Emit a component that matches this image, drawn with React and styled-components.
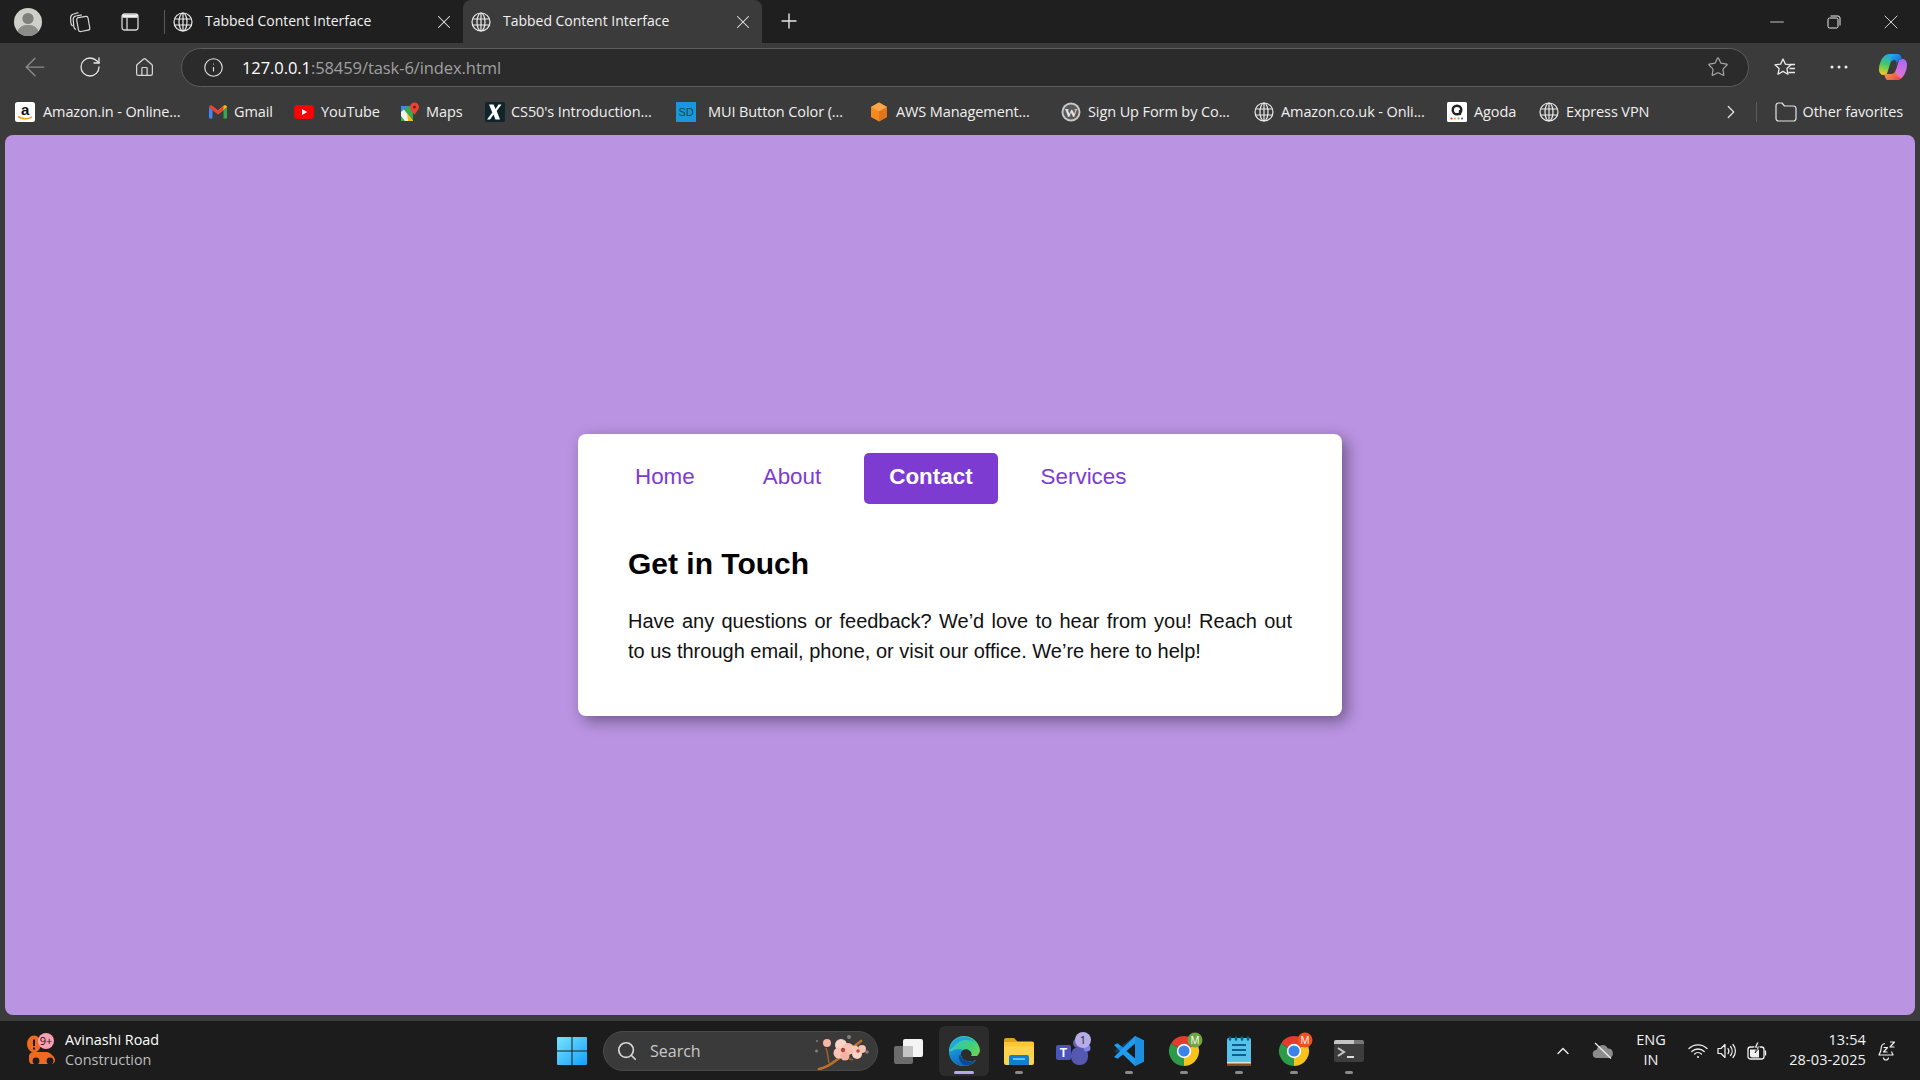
import React from "react";
import styled, { createGlobalStyle } from "styled-components";
import {
  ArrowLeft,
  RotateCw,
  House,
  Info,
  Star,
  Plus,
  X,
  Minus,
  ChevronRight,
  ChevronUp,
  Search,
} from "lucide-react";

const GlobalStyle = createGlobalStyle`
  * { box-sizing: border-box; }
  html, body { margin: 0; padding: 0; }
  body { font-family: "Open Sans", "Noto Sans", sans-serif; overflow: hidden; background: #3b3b3b; }
`;

const Screen = styled.div`
  width: 1920px;
  height: 1080px;
  display: flex;
  flex-direction: column;
  background: #3b3b3b;
`;

/* browser chrome */
const TabStrip = styled.div`
  height: 43px;
  display: flex;
  align-items: center;
  background: #1f1f1f;
  color: #fff;
`;

const Slot = styled.div`
  flex: none;
  width: ${(p) => p.$w}px;
  height: 100%;
  display: flex;
  align-items: center;
  justify-content: center;
  margin-left: ${(p) => p.$ml || 0}px;
  padding-bottom: ${(p) => p.$pb || 0}px;
  color: ${(p) => p.$color || "#e6e6e6"};
`;

const TabDivider = styled.div`
  flex: none;
  width: 1px;
  height: 24px;
  margin-left: 8px;
  background: #5a5a5a;
`;

const Tab = styled.div`
  flex: none;
  width: ${(p) => p.$w}px;
  height: 43px;
  padding: 0 8px;
  display: flex;
  align-items: center;
  gap: 12px;
  border-radius: 8px 8px 0 0;
  background: ${(p) => (p.$active ? "#3b3b3b" : "transparent")};
`;

const TabTitle = styled.span`
  flex: 1;
  padding-bottom: 2px;
  font-size: 14px;
  letter-spacing: -0.02px;
  color: #f2f2f2;
  white-space: nowrap;
`;

const WindowControls = styled.div`
  margin-left: auto;
  height: 100%;
  display: flex;
`;

const Toolbar = styled.div`
  height: 45px;
  padding: 3px 0 0 8px;
  display: flex;
  align-items: center;
  background: #3b3b3b;
`;

const UrlBox = styled.div`
  flex: none;
  width: 1568px;
  height: 39px;
  margin-left: 9px;
  padding: 0 19px 0 21px;
  display: flex;
  align-items: center;
  border: 1.5px solid #5c5c5c;
  border-radius: 20px;
  background: #2b2b2b;
`;

const UrlText = styled.span`
  margin-left: 18px;
  flex: 1;
  font-size: 16.5px;
  letter-spacing: -0.08px;
  color: #a0a0a0;
  b {
    font-weight: 400;
    color: #fff;
  }
`;

const ToolbarEnd = styled.div`
  margin-left: 9px;
  height: 100%;
  display: flex;
`;

const Bookmarks = styled.div`
  height: 47px;
  padding-left: 15px;
  display: flex;
  align-items: center;
  background: #3b3b3b;
`;

const Bookmark = styled.div`
  flex: none;
  width: ${(p) => p.$w}px;
  display: flex;
  align-items: center;
  gap: ${(p) => p.$gap || 7}px;
  font-size: 14.5px;
  letter-spacing: -0.1px;
  color: #f0f0f0;
  white-space: nowrap;
`;

const BookmarkEnd = styled.div`
  margin-left: auto;
  padding-right: 17px;
  display: flex;
  align-items: center;
  gap: 6px;
  font-size: 14.5px;
  letter-spacing: -0.1px;
  color: #f0f0f0;
`;

const BarDivider = styled.div`
  width: 1px;
  height: 20px;
  margin: 0 12px 0 8px;
  background: #5a5a5a;
`;

/* page */
const PageFrame = styled.div`
  flex: 1;
  padding: 0 5px 5px;
  display: flex;
`;

const Page = styled.main`
  flex: 1;
  display: flex;
  align-items: center;
  justify-content: center;
  border-radius: 8px;
  background: #ba93e2;
  font-family: "Liberation Sans", Arial, sans-serif;
`;

const Card = styled.section`
  width: 764px;
  height: 282px;
  padding-top: 19px;
  border-radius: 8px;
  background: #fff;
  box-shadow: 5px 5px 15px rgba(0, 0, 0, 0.4);
`;

const TabNav = styled.nav`
  padding: 0 32px;
  display: flex;
  gap: 18px;
`;

const NavButton = styled.button`
  height: 51px;
  padding: 0 25px 3px;
  border: 0;
  border-radius: 5px;
  font-family: inherit;
  font-size: 22.4px;
  font-weight: ${(p) => (p.$active ? 700 : 400)};
  color: ${(p) => (p.$active ? "#fff" : "#7e3bd2")};
  background: ${(p) => (p.$active ? "#7e3bd2" : "transparent")};
`;

const Panel = styled.div`
  padding: 42px 50px 0;
`;

const Heading = styled.h2`
  margin: 0 0 25px;
  font-size: 30px;
  line-height: 35px;
  font-weight: 700;
  color: #000;
`;

const Copy = styled.p`
  margin: 0;
  font-size: 20px;
  line-height: 30px;
  text-align: justify;
  color: #111;
`;

/* taskbar */
const Taskbar = styled.footer`
  height: 60px;
  display: flex;
  align-items: center;
  border-top: 1px solid #3a3a3a;
  background: #1c1c1c;
  color: #fff;
`;

const Widget = styled.div`
  flex: none;
  width: 552px;
  height: 100%;
  padding-left: 25px;
  display: flex;
  align-items: center;
  gap: 4px;
`;

const WidgetText = styled.div`
  padding-bottom: 2px;
  font-size: 14.4px;
  line-height: 20px;
  white-space: nowrap;
  small {
    display: block;
    font-size: 14.4px;
    color: #bdbdbd;
  }
`;

const SearchPill = styled.div`
  flex: none;
  width: 275px;
  height: 40px;
  margin-left: 11px;
  padding: 0 6px 0 12px;
  display: flex;
  align-items: center;
  justify-content: space-between;
  border: 1px solid #4a4a4a;
  border-radius: 20px;
  background: #3a3a3a;
`;

const SearchLabel = styled.span`
  flex: 1;
  margin-left: 12px;
  font-size: 16px;
  color: #c8c8c8;
`;

const TaskSlot = styled.div`
  position: relative;
  flex: none;
  width: 55px;
  height: 100%;
  display: flex;
  align-items: center;
  justify-content: center;
  margin-left: ${(p) => p.$ml || 0}px;
`;

const ActiveBox = styled.div`
  position: absolute;
  top: 5px;
  left: 2.5px;
  width: 50px;
  height: 50px;
  border-radius: 6px;
  background: #2c2c2c;
`;

const Pip = styled.span`
  position: absolute;
  bottom: 6px;
  left: 50%;
  width: ${(p) => (p.$active ? 20 : 8)}px;
  height: 3px;
  border-radius: 2px;
  transform: translateX(-50%);
  background: ${(p) => (p.$active ? "#b5a7ea" : "#8a8a8a")};
`;

const IconLayer = styled.div`
  position: relative;
  display: flex;
`;

const Tray = styled.div`
  margin-left: auto;
  height: 100%;
  padding-right: 18px;
  display: flex;
  align-items: center;
`;

const TraySlot = styled.div`
  flex: none;
  width: ${(p) => p.$w}px;
  margin-left: ${(p) => p.$ml || 0}px;
  display: flex;
  justify-content: center;
  text-align: center;
  color: #f2f2f2;
`;

const Lang = styled.div`
  padding-bottom: 2px;
  font-size: 14.5px;
  line-height: 20px;
`;

const Clock = styled.div`
  width: 100%;
  padding-bottom: 2px;
  text-align: right;
  font-size: 14.5px;
  letter-spacing: 0.12px;
  line-height: 20px;
  white-space: nowrap;
`;

/* small drawings */
const GlobeIcon = ({ size = 20 }) => (
  <svg width={size} height={size} viewBox="0 0 20 20" fill="none" stroke="#ececec" strokeWidth="1.2">
    <circle cx="10" cy="10" r="9" />
    <ellipse cx="10" cy="10" rx="4" ry="9" />
    <path d="M1.6 7h16.8M1.6 13h16.8M10 1v18" />
  </svg>
);

const Avatar = () => (
  <svg width="28" height="28" viewBox="0 0 28 28">
    <circle cx="14" cy="14" r="14" fill="#cfcfca" />
    <circle cx="14" cy="10.5" r="5.6" fill="#7f7f7b" />
    <path d="M3.6 23.5C5 18.8 9 17 14 17s9 1.8 10.4 6.5A14 14 0 0 1 3.6 23.5z" fill="#8c8c88" />
  </svg>
);

const CollectionsIcon = () => (
  <svg width="22" height="22" viewBox="0 0 22 22" fill="none" stroke="#d8d8d8" strokeWidth="1.2" strokeLinejoin="round">
    <rect x="8.5" y="6" width="11.5" height="14" rx="2" transform="rotate(-10 14 13)" />
    <path d="M7 18.5C5.8 18 5 17 4.8 15.6L4.2 8.5C4 6.8 5.2 5.4 6.8 5l6-1.2" />
    <path d="M3.6 15C2.4 14 1.8 13 1.8 11.6L1.6 7C1.6 5 2.8 3.4 4.6 3L9.4 1.6" />
  </svg>
);

const VerticalTabsIcon = () => (
  <svg width="18" height="18" viewBox="0 0 18 18" fill="none" stroke="#d8d8d8" strokeWidth="1.3">
    <rect x="1" y="1" width="16" height="16" rx="2.5" />
    <path d="M1.5 1.6h15v3.2h-15z" fill="#f0f0f0" stroke="none" />
    <path d="M6 5v12" />
  </svg>
);

const RestoreIcon = () => (
  <svg width="14" height="14" viewBox="0 0 14 14" fill="none" stroke="#eee" strokeWidth="1">
    <rect x="1" y="3" width="10" height="10" rx="1.5" />
    <path d="M3.5 1h7.5A2 2 0 0 1 13 3v7.5" />
  </svg>
);

const FavoritesIcon = () => (
  <svg width="22" height="22" viewBox="0 0 22 22" fill="none" stroke="#eaeaea" strokeWidth="1.3" strokeLinejoin="round">
    <path d="M9 1l2.400 5.100 5.600.7-4.100 3.800 1.100 5.600L9 13.400l-5 2.800 1.100-5.600L1 6.800l5.600-.7z" transform="translate(0 2)" />
    <path d="M15.500 8.500H21M15.500 12.500H21M14.500 16.500H21" />
  </svg>
);

const CopilotIcon = () => (
  <svg width="30" height="30" viewBox="0 0 30 30">
    <defs>
      <linearGradient id="cpA" x1="0.5" y1="0" x2="0.2" y2="1">
        <stop offset="0" stopColor="#2aa0f0" />
        <stop offset="0.5" stopColor="#3ec86a" />
        <stop offset="1" stopColor="#f4cf1f" />
      </linearGradient>
      <linearGradient id="cpB" x1="0.7" y1="0" x2="0.4" y2="1">
        <stop offset="0" stopColor="#a86cf0" />
        <stop offset="0.55" stopColor="#d56ee0" />
        <stop offset="1" stopColor="#f27a8a" />
      </linearGradient>
      <linearGradient id="cpC" x1="0" y1="0" x2="1" y2="1">
        <stop offset="0" stopColor="#20b4e8" />
        <stop offset="1" stopColor="#1a50d8" />
      </linearGradient>
      <linearGradient id="cpD" x1="0" y1="0" x2="1" y2="0.6">
        <stop offset="0" stopColor="#f5b040" />
        <stop offset="1" stopColor="#ee4a4a" />
      </linearGradient>
    </defs>
    <path d="M11 2h8.500c1.600 0 2.600 1 3.200 2.600L24 8h-8c-2 0-3 1.200-3.600 3l-3 9.500C9 22 8 23 6 23 3 23 1 21 1 17.500 1 11 5 2 11 2z" fill="url(#cpA)" />
    <path d="M19 28h-8.500c-1.600 0-2.600-1-3.200-2.600L6 22h8c2 0 3-1.200 3.600-3l3-9.500C21 8 22 7 24 7c3 0 5 2 5 5.500C29 19 25 28 19 28z" fill="url(#cpB)" />
    <path d="M13 2h6.500c1.600 0 2.600 1 3.200 2.600L24 8c-2.500-.8-4 .5-4.600 2.600l-.9 2.600c.5-3.300-.5-5.200-2.500-5.200-2 0-3 1.200-3.600 3z" fill="url(#cpC)" />
    <path d="M8 25.500c.7 1.500 1.500 2.500 2.500 2.500H19c1.500 0 3-.7 4.300-2-4.300-1-5.800-4-5.700-8.500l-.3 1.500c-.6 1.800-1.600 3-3.600 3H6z" fill="url(#cpD)" />
  </svg>
);

const FolderOutline = () => (
  <svg width="22" height="20" viewBox="0 0 22 20" fill="none" stroke="#e4e4e4" strokeWidth="1.2" strokeLinejoin="round">
    <path d="M1 3.500A2.500 2.500 0 0 1 3.500 1H7l2.500 3h9A2.500 2.500 0 0 1 21 6.500v10a2.500 2.500 0 0 1-2.500 2.500h-15A2.500 2.500 0 0 1 1 16.500z" />
  </svg>
);

const AmazonMark = () => (
  <svg width="20" height="20" viewBox="0 0 20 20">
    <rect width="20" height="20" rx="2.500" fill="#fff" />
    <text x="10" y="12.500" textAnchor="middle" fontFamily="Liberation Sans" fontWeight="700" fontSize="15" fill="#111">a</text>
    <path d="M3 14.500c4 3 10 3 14 .3" fill="none" stroke="#f79c1c" strokeWidth="1.600" />
  </svg>
);

const GmailMark = () => (
  <svg width="20" height="20" viewBox="0 0 20 20">
    <path d="M1 5v11.500h3.500V8z" fill="#4285f4" />
    <path d="M19 5v11.500h-3.500V8z" fill="#34a853" />
    <path d="M1 5c0-1.600 1.800-2.400 3-1.400L10 8.500l-.1 3.800-5.400-4.300z" fill="#ea4335" />
    <path d="M19 5c0-1.600-1.800-2.400-3-1.400L10 8.500v3.800l5.500-4.300z" fill="#fbbc04" />
    <path d="M4.500 3.900L10 8.500l5.500-4.600V8L10 12.300 4.500 8z" fill="#ea4335" />
  </svg>
);

const YouTubeMark = () => (
  <svg width="20" height="20" viewBox="0 0 20 20">
    <rect y="3" width="20" height="14" rx="4" fill="#f00" />
    <path d="M8 7l5.200 3L8 13z" fill="#fff" />
  </svg>
);

const MapsMark = () => (
  <svg width="20" height="20" viewBox="0 0 20 20">
    <path d="M1 4h12v15H1z" fill="#34a853" />
    <path d="M1 4l12 15H5L1 14z" fill="#f2f2f2" />
    <path d="M1 4h7L1 10z" fill="#4285f4" />
    <path d="M7 11l6 8h-5z" fill="#fbbc04" />
    <path d="M14.500 0.500a4.500 4.500 0 0 1 4.500 4.500c0 3-3 5-4.500 8-1.500-3-4.500-5-4.500-8a4.500 4.500 0 0 1 4.500-4.500z" fill="#ea4335" />
    <circle cx="14.500" cy="5" r="1.600" fill="#8c1c13" />
  </svg>
);

const Cs50Mark = () => (
  <svg width="20" height="20" viewBox="0 0 20 20">
    <rect width="20" height="20" rx="2" fill="#10252b" />
    <path d="M4 2.500h4.500l2 4.500 3-4.500h3l-4.800 6.500 3.300 8.500h-4.500l-2-5-3.500 5h-3l5.300-7z" fill="#fff" />
  </svg>
);

const SdMark = () => (
  <svg width="20" height="20" viewBox="0 0 20 20">
    <rect width="20" height="20" fill="#1b96dc" />
    <text x="10" y="14" textAnchor="middle" fontFamily="Liberation Sans" fontSize="11" fill="#06503c">SD</text>
  </svg>
);

const AwsMark = () => (
  <svg width="20" height="20" viewBox="0 0 20 20">
    <path d="M10 .5l8 4.500v10l-8 4.500-8-4.500V5z" fill="#f58a1f" />
    <path d="M10 .5l8 4.500-8 4.500-8-4.500z" fill="#f9a64a" />
    <path d="M10 9.500l8-4.500v10l-8 4.500z" fill="#e0751a" />
  </svg>
);

const WordpressMark = () => (
  <svg width="20" height="20" viewBox="0 0 20 20">
    <circle cx="10" cy="10" r="9.500" fill="#c9c9c9" />
    <circle cx="10" cy="10" r="7.600" fill="#5a5a5a" />
    <text x="10" y="14.500" textAnchor="middle" fontFamily="Liberation Serif" fontWeight="700" fontSize="13" fill="#e8e8e8">W</text>
  </svg>
);

const AgodaMark = () => (
  <svg width="20" height="20" viewBox="0 0 20 20">
    <rect width="20" height="20" rx="1.500" fill="#fff" />
    <circle cx="10" cy="8" r="4.300" fill="none" stroke="#222" strokeWidth="2.400" />
    <path d="M13 8v5" stroke="#222" strokeWidth="2.200" />
    <circle cx="4.500" cy="16.500" r="1.100" fill="#e2322d" />
    <circle cx="8" cy="16.500" r="1.100" fill="#f2b21b" />
    <circle cx="11.500" cy="16.500" r="1.100" fill="#7ab72b" />
    <circle cx="15" cy="16.500" r="1.100" fill="#7347c4" />
  </svg>
);

const TrafficIcon = () => (
  <svg width="36" height="36" viewBox="0 0 36 36">
    <ellipse cx="9" cy="11" rx="7" ry="8.500" fill="#ee6a20" />
    <rect x="8" y="6.500" width="2" height="6.500" fill="#1c1c1c" />
    <rect x="8" y="14.500" width="2" height="2" fill="#1c1c1c" />
    <path d="M4 23c0-2 2-4 5-4h12c3 0 5 2 7 4 1 1 2 2 2 4 0 2-1 4-4 4H7c-2 0-3-2-3-4z" fill="#ee6a20" />
    <circle cx="11" cy="28" r="3.400" fill="#1c1c1c" />
    <circle cx="25" cy="28" r="3.400" fill="#1c1c1c" />
    <circle cx="21" cy="8" r="8" fill="#f99fb1" />
    <text x="21" y="12" textAnchor="middle" fontFamily="Open Sans" fontSize="11" fill="#111">9+</text>
  </svg>
);

const WindowsLogo = () => (
  <svg width="30" height="30" viewBox="0 0 30 30">
    <defs>
      <linearGradient id="winA" x1="0" y1="0" x2="1" y2="1">
        <stop offset="0" stopColor="#7ae4fd" />
        <stop offset="1" stopColor="#12a0fb" />
      </linearGradient>
    </defs>
    <path d="M1 1h13.500v13.500H0V2a1 1 0 0 1 1-1zM15.500 1H29a1 1 0 0 1 1 1v12.500H15.500zM0 15.500h14.500V29H1a1 1 0 0 1-1-1zM15.500 15.500H30V28a1 1 0 0 1-1 1H15.500z" fill="url(#winA)" />
  </svg>
);

const Blossom = () => (
  <svg width="56" height="38" viewBox="0 0 56 38">
    <path d="M4 37c6-1 11-4 16-8 8-5 16-12 26-20" fill="none" stroke="#b9722a" strokeWidth="2.600" strokeLinecap="round" />
    <path d="M14 31c-1-5-1-10-3-15M26 24l12 4" fill="none" stroke="#a56224" strokeWidth="1.500" />
    <circle cx="12" cy="11" r="4" fill="#f5b7a8" />
    <circle cx="26" cy="13" r="6" fill="#fbd3c6" />
    <circle cx="33" cy="17" r="6" fill="#f9c1b1" />
    <circle cx="24" cy="21" r="5.500" fill="#f8c6b6" />
    <circle cx="30" cy="24" r="4.500" fill="#f6b2a3" />
    <circle cx="28" cy="18" r="2.200" fill="#b8433c" />
    <circle cx="42" cy="22" r="5" fill="#fbd3c6" />
    <circle cx="47" cy="17" r="4" fill="#f9c1b1" />
    <circle cx="40" cy="17" r="3.500" fill="#f8c6b6" />
    <circle cx="43" cy="19" r="1.700" fill="#b8433c" />
    <circle cx="34" cy="5" r="2" fill="#8a7d7d" />
    <circle cx="52" cy="20" r="1.800" fill="#8a7d7d" />
    <circle cx="1.500" cy="19" r="1.500" fill="#8a7d7d" />
    <circle cx="2" cy="9" r="1" fill="#8a7d7d" />
  </svg>
);

const TaskViewIcon = () => (
  <svg width="30" height="28" viewBox="0 0 30 28">
    <rect x="0" y="9" width="19" height="18" rx="2" fill="#6c6c6c" />
    <rect x="9" y="2" width="20" height="18" rx="2" fill="#f4f4f4" />
    <rect x="9" y="9" width="10" height="11" fill="#c4c4c4" />
  </svg>
);

const EdgeIcon = () => (
  <svg width="32" height="32" viewBox="0 0 32 32">
    <defs>
      <linearGradient id="edgeA" x1="0" y1="0" x2="1" y2="0.8">
        <stop offset="0" stopColor="#36c0d8" />
        <stop offset="0.6" stopColor="#3fd07a" />
        <stop offset="1" stopColor="#8ad24a" />
      </linearGradient>
      <linearGradient id="edgeB" x1="0" y1="0" x2="0.6" y2="1">
        <stop offset="0" stopColor="#1a9ae0" />
        <stop offset="1" stopColor="#0f62b8" />
      </linearGradient>
    </defs>
    <path d="M16 1C7 1 1 8 1 16c0 9 7 15 15 15 5 0 9-2 12-6-4 2-10 2-13-1-3-3-3-7 0-9 2-1 5-1 7 1 2 2 2 4 1 5h6c2-2 3-4 3-6C31 7 24 1 16 1z" fill="url(#edgeA)" />
    <path d="M1 16c0 9 7 15 15 15 5 0 9-2 12-6-4 2-10 2-13-1-3-3-3-7 0-9-4-2-9-1-11 1-2 1-3 0-3 0z" fill="url(#edgeB)" />
    <path d="M1.500 14C3 7 8 2 16 2c4 0 8 1.500 10 5-4-2.500-10-3-15 0-3 1.800-5 4-6 5.500-1 1-3 2-3.500 1.500z" fill="#1fa7dc" />
    <path d="M11 22c0 4 3 8 8 8.500 3 0 6-2 9-5.500-4 2-10 2-13-1-1.500-1.500-2.500-3-2.500-5-1 1-1.500 2-1.500 3z" fill="#0b4a93" />
  </svg>
);

const FilesIcon = () => (
  <svg width="30" height="28" viewBox="0 0 30 28">
    <path d="M0 3a2 2 0 0 1 2-2h8l4 4H0z" fill="#e0a21c" />
    <path d="M0 5h28a2 2 0 0 1 2 2v19a2 2 0 0 1-2 2H2a2 2 0 0 1-2-2z" fill="#fcd34d" />
    <path d="M0 5h12l2-0.500H28a2 2 0 0 1 2 2v3H0z" fill="#fbc834" />
    <path d="M5 28v-8a2 2 0 0 1 2-2h16a2 2 0 0 1 2 2v8z" fill="#0f7fd4" />
    <rect x="9" y="21" width="12" height="2" fill="#5fc1f5" />
  </svg>
);

const TeamsIcon = () => (
  <svg width="38" height="38" viewBox="0 0 38 38">
    <circle cx="23" cy="11" r="5" fill="#6264a7" />
    <rect x="16" y="15" width="17" height="18" rx="8" fill="#5558af" />
    <circle cx="32" cy="16" r="3.500" fill="#7b83eb" />
    <rect x="1" y="13" width="15" height="15" rx="2" fill="#4b53bc" />
    <text x="8.500" y="25" textAnchor="middle" fontFamily="Liberation Sans" fontWeight="700" fontSize="12" fill="#fff">T</text>
    <circle cx="28" cy="8" r="8" fill="#b7ace8" />
    <text x="28" y="12" textAnchor="middle" fontFamily="Open Sans" fontSize="11" fill="#1c1c1c">1</text>
  </svg>
);

const VsCodeIcon = () => (
  <svg width="30" height="30" viewBox="0 0 30 30">
    <path d="M21 0l9 4.500v21L21 30 9 18.500l-5.500 4.300L0 21l6-6-6-6 3.500-1.800L9 11.500z" fill="#1f9cf0" />
    <path d="M21 7.500L12.500 15 21 22.500z" fill="#1c1c1c" />
    <path d="M21 0l9 4.500v21L21 30z" fill="#1c8fe0" />
    <path d="M21 0L3.500 17.200 0 15z" fill="#0f6fb8" opacity="0.4" />
  </svg>
);

const ChromeIcon = ({ badge, label }) => (
  <svg width="38" height="38" viewBox="-4 -4 38 38">
    <path d="M15 15L2 7.500A15 15 0 0 1 28 7.500z" fill="#e33b2e" />
    <path d="M15 15L28 7.500A15 15 0 0 1 15 30z" fill="#f7c21c" />
    <path d="M15 15L15 30A15 15 0 0 1 2 7.500z" fill="#2c9a48" />
    <circle cx="15" cy="15" r="7.200" fill="#fff" />
    <circle cx="15" cy="15" r="5.600" fill="#3b82ea" />
    <circle cx="26" cy="4" r="7.500" fill={badge} />
    <text x="26" y="8" textAnchor="middle" fontFamily="Open Sans" fontSize="10" fill="#fff">{label}</text>
  </svg>
);

const NotepadIcon = () => (
  <svg width="24" height="30" viewBox="0 0 24 30">
    <rect x="0" y="2" width="24" height="26" rx="1.500" fill="#56c3ea" />
    <rect x="0" y="26" width="24" height="4" fill="#8a4a1c" />
    <rect x="0" y="26" width="24" height="1.500" fill="#e8e2d8" />
    <path d="M5 9h14M5 14h14M5 19h14" stroke="#0f5f8c" strokeWidth="2" />
    <path d="M3 1.500v2M9 1.500v2M15 1.500v2M21 1.500v2" stroke="#0f5f8c" strokeWidth="2.500" strokeLinecap="round" />
  </svg>
);

const TerminalIcon = () => (
  <svg width="30" height="22" viewBox="0 0 30 22">
    <rect width="30" height="22" rx="2" fill="#3d3d3d" />
    <path d="M0 2a2 2 0 0 1 2-2h18v4H0z" fill="#c4c4c4" />
    <path d="M20 0h8a2 2 0 0 1 2 2v2H20z" fill="#777" />
    <path d="M4 8l6 4-6 4" fill="none" stroke="#c8c8c8" strokeWidth="2" />
    <path d="M13 17h7" stroke="#f0f0f0" strokeWidth="1.800" />
  </svg>
);

const CloudOffIcon = () => (
  <svg width="22" height="18" viewBox="0 0 22 18">
    <path d="M5 16a4 4 0 0 1-.5-8 6 6 0 0 1 11.300-1.500A4.800 4.800 0 0 1 17 16z" fill="#8c8c8c" />
    <path d="M3 1l16 15.500" stroke="#ececec" strokeWidth="1.300" />
  </svg>
);

const WifiIcon = () => (
  <svg width="20" height="16" viewBox="0 0 20 16" fill="none" stroke="#f2f2f2" strokeWidth="1.300" strokeLinecap="round">
    <path d="M1 5.500a13 13 0 0 1 18 0M3.800 8.500a9 9 0 0 1 12.400 0M6.600 11a5 5 0 0 1 6.800 0" />
    <circle cx="10" cy="14" r="1" fill="#f2f2f2" stroke="none" />
  </svg>
);

const VolumeIcon = () => (
  <svg width="20" height="18" viewBox="0 0 20 18" fill="none" stroke="#f2f2f2" strokeWidth="1.200" strokeLinejoin="round">
    <path d="M1 6.500h3L8 2.500v13l-4-4H1z" />
    <path d="M11 6.500a4 4 0 0 1 0 5M13.500 4.500a7 7 0 0 1 0 9M16 2.500a10 10 0 0 1 0 13" strokeLinecap="round" />
  </svg>
);

const BatteryIcon = () => (
  <svg width="20" height="18" viewBox="0 0 20 18" fill="none" stroke="#f2f2f2" strokeWidth="1.300">
    <rect x="1" y="5" width="16" height="12" rx="2.500" />
    <path d="M18.500 8.500v5" />
    <path d="M3 7.500h9v8H5a2 2 0 0 1-2-2z" fill="#f2f2f2" stroke="none" />
    <path d="M10 0l-3 6h3l-2 5 5-6h-3l2-5z" fill="#f2f2f2" stroke="#1c1c1c" strokeWidth="0.800" />
  </svg>
);

const BellSnoozeIcon = () => (
  <svg width="18" height="20" viewBox="0 0 18 20" fill="none" stroke="#f2f2f2" strokeWidth="1.200" strokeLinejoin="round">
    <path d="M7 2.500C3.500 3 3 6 3 8.500c0 2.500-2 4.500-2 5.500h14c0-1-1.200-2-1.500-3.500" />
    <path d="M5.500 16.500a2.500 2.500 0 0 0 5 0" />
    <path d="M5.500 6.500h4l-4 4.500h4M12 1h4.500L12 6h4.500" />
  </svg>
);

const bookmarks = [
  { title: "Amazon.in - Online...", w: 193, gap: 8, icon: <AmazonMark /> },
  { title: "Gmail", w: 86, gap: 6, icon: <GmailMark /> },
  { title: "YouTube", w: 106, icon: <YouTubeMark /> },
  { title: "Maps", w: 85, gap: 6, icon: <MapsMark /> },
  { title: "CS50's Introduction...", w: 191, gap: 6, icon: <Cs50Mark /> },
  { title: "MUI Button Color (...", w: 193, gap: 12, icon: <SdMark /> },
  { title: "AWS Management...", w: 192, icon: <AwsMark /> },
  { title: "Sign Up Form by Co...", w: 193, icon: <WordpressMark /> },
  { title: "Amazon.co.uk - Onli...", w: 193, icon: <GlobeIcon /> },
  { title: "Agoda", w: 92, icon: <AgodaMark /> },
  { title: "Express VPN", w: 120, icon: <GlobeIcon /> },
];

const navItems = ["Home", "About", "Contact", "Services"];

const taskItems = [
  { key: "view", icon: <TaskViewIcon /> },
  { key: "edge", icon: <EdgeIcon />, active: true },
  { key: "files", icon: <FilesIcon />, pip: true },
  { key: "teams", icon: <TeamsIcon /> },
  { key: "code", icon: <VsCodeIcon />, pip: true },
  { key: "chrome", icon: <ChromeIcon badge="#6fa544" label="M" />, pip: true },
  { key: "notes", icon: <NotepadIcon />, pip: true },
  { key: "chrome2", icon: <ChromeIcon badge="#f0501e" label="M" />, pip: true },
  { key: "term", icon: <TerminalIcon />, pip: true },
];

export default function App() {
  return (
    <Screen>
      <GlobalStyle />
      <TabStrip>
        <Slot $w={56}><Avatar /></Slot>
        <Slot $w={48}><CollectionsIcon /></Slot>
        <Slot $w={52}><VerticalTabsIcon /></Slot>
        <TabDivider />
        {["a", "b"].map((id) => (
          <Tab key={id} $w={id === "a" ? 298 : 299} $active={id === "b"}>
            <GlobeIcon />
            <TabTitle>Tabbed Content Interface</TabTitle>
            <X size={22} strokeWidth={1.1} color="#e6e6e6" />
          </Tab>
        ))}
        <Slot $w={24} $ml={15} $pb={2}><Plus size={24} strokeWidth={1.4} /></Slot>
        <WindowControls>
          <Slot $w={57}><Minus size={22} strokeWidth={0.9} /></Slot>
          <Slot $w={57}><RestoreIcon /></Slot>
          <Slot $w={58}><X size={24} strokeWidth={0.9} /></Slot>
        </WindowControls>
      </TabStrip>

      <Toolbar>
        <Slot $w={54} $color="#8d8d8d"><ArrowLeft size={30} strokeWidth={1} /></Slot>
        <Slot $w={55}><RotateCw size={24} strokeWidth={1.3} /></Slot>
        <Slot $w={55} $color="#d8d8d8"><House size={21} strokeWidth={1.4} /></Slot>
        <UrlBox>
          <Info size={21} strokeWidth={1.3} color="#e4e4e4" />
          <UrlText><b>127.0.0.1</b>:58459/task-6/index.html</UrlText>
          <Star size={22} strokeWidth={1.3} color="#a8a8a8" />
        </UrlBox>
        <ToolbarEnd>
          <Slot $w={54}><FavoritesIcon /></Slot>
          <Slot $w={54}>
            <svg width="18" height="4" viewBox="0 0 18 4" fill="#eee">
              <circle cx="2" cy="2" r="1.500" />
              <circle cx="9" cy="2" r="1.500" />
              <circle cx="16" cy="2" r="1.500" />
            </svg>
          </Slot>
          <Slot $w={54}><CopilotIcon /></Slot>
        </ToolbarEnd>
      </Toolbar>

      <Bookmarks>
        {bookmarks.map((b) => (
          <Bookmark key={b.title} $w={b.w} $gap={b.gap}>
            {b.icon}
            {b.title}
          </Bookmark>
        ))}
        <BookmarkEnd>
          <ChevronRight size={22} strokeWidth={1.3} color="#e6e6e6" />
          <BarDivider />
          <FolderOutline />
          Other favorites
        </BookmarkEnd>
      </Bookmarks>

      <PageFrame>
        <Page>
          <Card>
            <TabNav>
              {navItems.map((item) => (
                <NavButton key={item} $active={item === "Contact"}>{item}</NavButton>
              ))}
            </TabNav>
            <Panel>
              <Heading>Get in Touch</Heading>
              <Copy>
                Have any questions or feedback? We’d love to hear from you! Reach out to us through email, phone, or visit our office. We’re here to help!
              </Copy>
            </Panel>
          </Card>
        </Page>
      </PageFrame>

      <Taskbar>
        <Widget>
          <TrafficIcon />
          <WidgetText>
            Avinashi Road
            <small>Construction</small>
          </WidgetText>
        </Widget>
        <Slot $w={40}><WindowsLogo /></Slot>
        <SearchPill>
          <Search size={22} strokeWidth={1.8} color="#d8d8d8" />
          <SearchLabel>Search</SearchLabel>
          <Blossom />
        </SearchPill>
        {taskItems.map((t, i) => (
          <TaskSlot key={t.key} $ml={i === 0 ? 3 : 0}>
            {t.active && <ActiveBox />}
            <IconLayer>{t.icon}</IconLayer>
            {(t.pip || t.active) && <Pip $active={t.active} />}
          </TaskSlot>
        ))}
        <Tray>
          <TraySlot $w={30}><ChevronUp size={20} strokeWidth={1.6} /></TraySlot>
          <TraySlot $w={50}><CloudOffIcon /></TraySlot>
          <TraySlot $w={46}><Lang>ENG<br />IN</Lang></TraySlot>
          <TraySlot $w={30} $ml={9}><WifiIcon /></TraySlot>
          <TraySlot $w={28}><VolumeIcon /></TraySlot>
          <TraySlot $w={32}><BatteryIcon /></TraySlot>
          <TraySlot $w={93}><Clock>13:54<br />28-03-2025</Clock></TraySlot>
          <TraySlot $w={30} $ml={6}><BellSnoozeIcon /></TraySlot>
        </Tray>
      </Taskbar>
    </Screen>
  );
}
